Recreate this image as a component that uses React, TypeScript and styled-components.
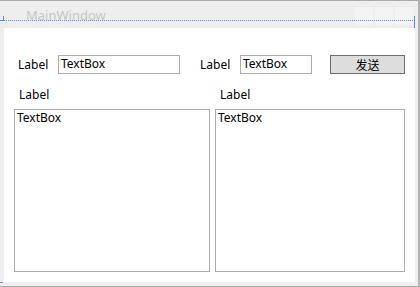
import React from "react";
import styled, { createGlobalStyle } from "styled-components";

const Global = createGlobalStyle`
  html, body { margin: 0; padding: 0; background: #ffffff; }
  body { font-family: "Noto Sans", "Noto Sans CJK SC", sans-serif; font-size: 12px; color: #000; }
`;

const Frame = styled.div`
  position: relative;
  box-sizing: border-box;
  width: 420px;
  height: 287px;
  background: #eeeeee;
  border-top: 1px solid #ababab;
  border-right: 2px solid #b4b4b4;
  border-bottom: 1px solid #ababab;
  display: flex;
  flex-direction: column;
`;

const TitleBar = styled.div`
  height: 27px;
  display: flex;
  align-items: flex-start;
  padding-left: 26px;
  box-sizing: border-box;
`;

const Title = styled.span`
  font-size: 13px;
  color: #c6c6c6;
  margin-top: 6px;
  line-height: 16px;
  flex: 1;
`;

const Caption = styled.div`
  display: flex;
  gap: 2px;
  margin-top: 6px;
  margin-right: 5px;
`;

const CaptionButton = styled.div`
  width: 18px;
  height: 18px;
  border-radius: 2px;
  background: #f4f4f4;
`;

const Client = styled.div`
  margin: 0 3px 0 4px;
  height: 254px;
  background: #ffffff;
  display: flex;
  flex-direction: column;
`;

const TopRow = styled.div`
  display: flex;
  align-items: center;
  height: 19px;
  margin-top: 27px;
  padding-left: 10px;
`;

const Label = styled.span<{ $w: number; $ml?: number }>`
  width: ${(p) => p.$w}px;
  margin-left: ${(p) => p.$ml ?? 0}px;
  line-height: 16px;
  white-space: nowrap;
`;

const TextBox = styled.div<{ $w: number }>`
  box-sizing: border-box;
  width: ${(p) => p.$w}px;
  height: 19px;
  border: 1px solid #abadb3;
  padding: 0 2px;
  line-height: 16px;
  background: #fff;
`;

const Button = styled.div`
  box-sizing: border-box;
  width: 75px;
  height: 19px;
  margin-left: 18px;
  border: 1px solid #707070;
  background: #dddddd;
  display: flex;
  align-items: center;
  justify-content: center;
  font-family: "Noto Sans CJK SC", sans-serif;
  font-size: 12px;
`;

const LabelRow = styled.div`
  display: flex;
  margin-top: 13px;
  height: 16px;
  padding-left: 15px;
`;

const AreaRow = styled.div`
  display: flex;
  gap: 5px;
  margin-top: 6px;
  padding-left: 10px;
`;

const TextArea = styled.div<{ $w: number }>`
  box-sizing: border-box;
  width: ${(p) => p.$w}px;
  height: 163px;
  border: 1px solid #abadb3;
  padding: 0 2px;
  line-height: 16px;
`;

const DotLine = styled.div`
  position: absolute;
  left: 4px;
  right: 3px;
  top: 19px;
  height: 1px;
  background: repeating-linear-gradient(90deg, #5b8de8 0 1px, transparent 1px 2px);
`;

const Marker = styled.div<{ $l: number; $t: number; $w: number; $h: number }>`
  position: absolute;
  left: ${(p) => p.$l}px;
  top: ${(p) => p.$t}px;
  width: ${(p) => p.$w}px;
  height: ${(p) => p.$h}px;
  background: #5b8de8;
`;

export default function App() {
  return (
    <>
      <Global />
      <Frame>
        <TitleBar>
          <Title>MainWindow</Title>
          <Caption>
            <CaptionButton />
            <CaptionButton />
            <CaptionButton />
          </Caption>
        </TitleBar>
        <Client>
          <TopRow>
            <Label $w={40} $ml={4}>Label</Label>
            <TextBox $w={122}>TextBox</TextBox>
            <Label $w={40} $ml={20}>Label</Label>
            <TextBox $w={72}>TextBox</TextBox>
            <Button>发送</Button>
          </TopRow>
          <LabelRow>
            <Label $w={201}>Label</Label>
            <Label $w={40}>Label</Label>
          </LabelRow>
          <AreaRow>
            <TextArea $w={196}>TextBox</TextArea>
            <TextArea $w={190}>TextBox</TextArea>
          </AreaRow>
        </Client>
        <DotLine />
        <Marker $l={3} $t={15} $w={1} $h={5} />
        <Marker $l={0} $t={19} $w={3} $h={1} />
        <Marker $l={414} $t={15} $w={1} $h={12} />
        <Marker $l={0} $t={281} $w={3} $h={1} />
      </Frame>
    </>
  );
}
